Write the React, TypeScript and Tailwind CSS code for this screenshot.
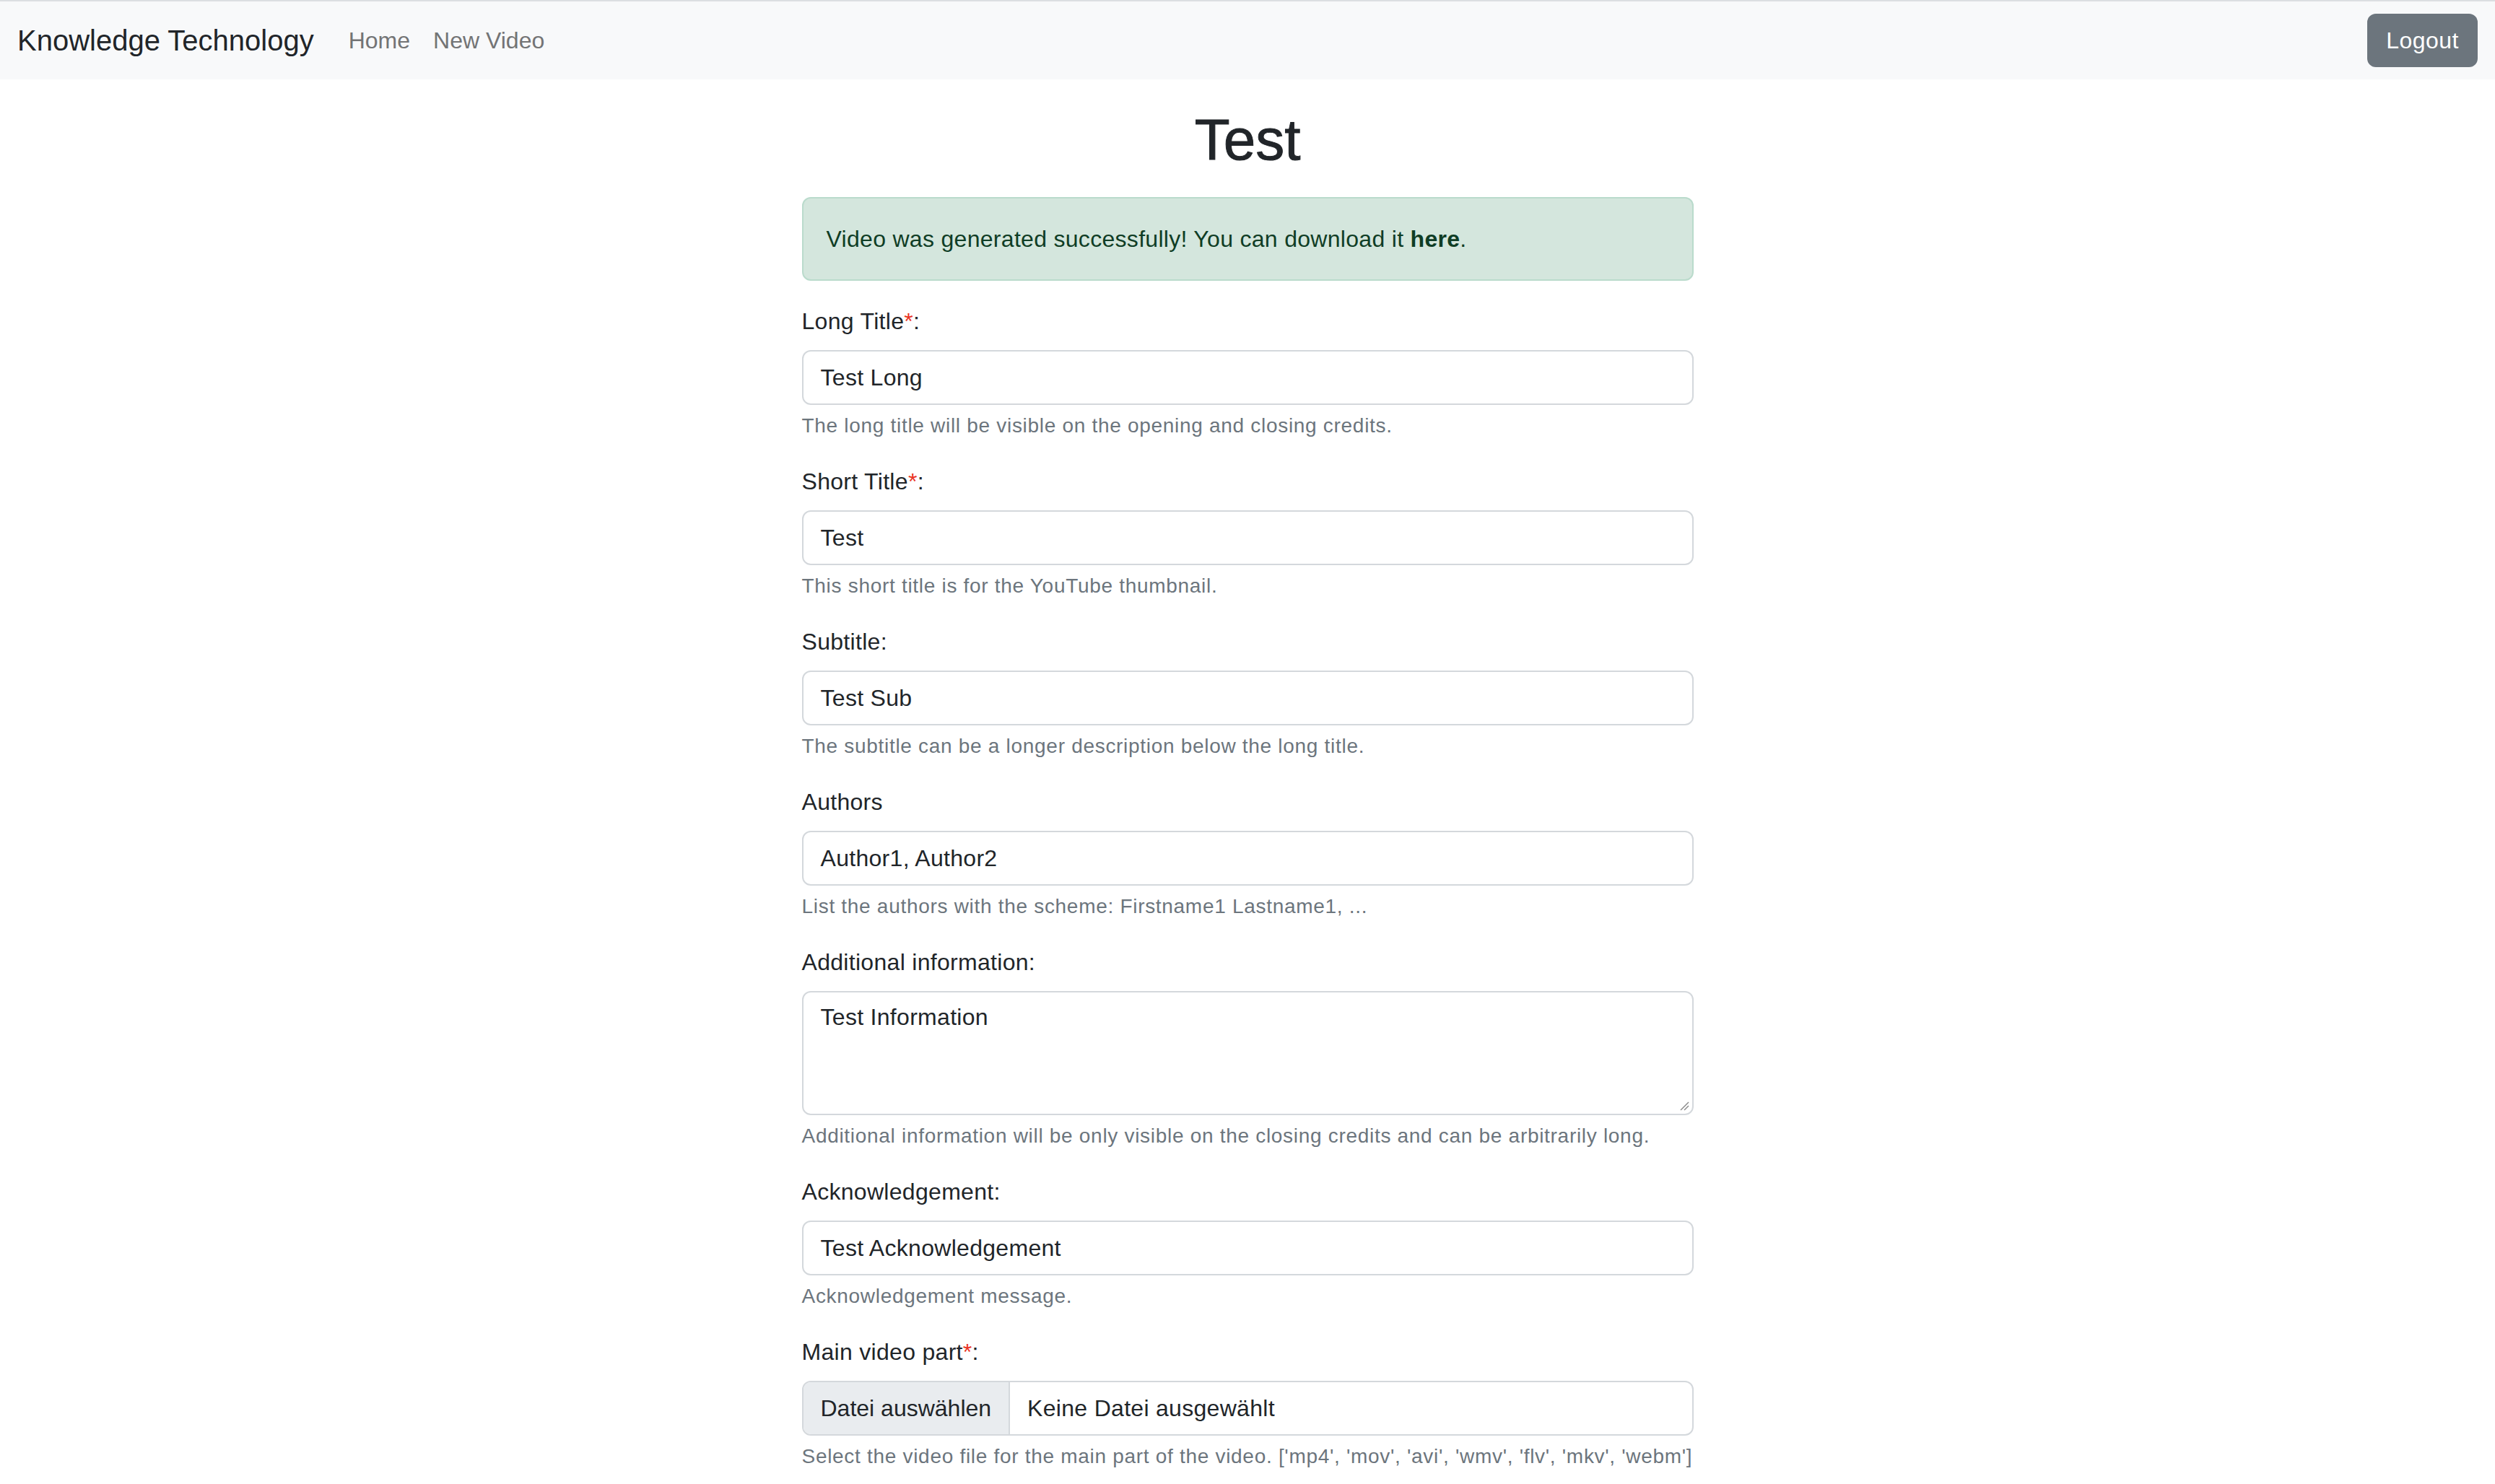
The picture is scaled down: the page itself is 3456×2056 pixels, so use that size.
import React from "react";

type FieldDef = {
    label: string;
    required?: boolean;
    colon?: boolean;
    value: string;
    help: string;
    kind: "input" | "textarea" | "file";
};

const fields: FieldDef[] = [
    { label: "Long Title", required: true, colon: true, value: "Test Long", help: "The long title will be visible on the opening and closing credits.", kind: "input" },
    { label: "Short Title", required: true, colon: true, value: "Test", help: "This short title is for the YouTube thumbnail.", kind: "input" },
    { label: "Subtitle", colon: true, value: "Test Sub", help: "The subtitle can be a longer description below the long title.", kind: "input" },
    { label: "Authors", value: "Author1, Author2", help: "List the authors with the scheme: Firstname1 Lastname1, ...", kind: "input" },
    { label: "Additional information", colon: true, value: "Test Information", help: "Additional information will be only visible on the closing credits and can be arbitrarily long.", kind: "textarea" },
    { label: "Acknowledgement", colon: true, value: "Test Acknowledgement", help: "Acknowledgement message.", kind: "input" },
    { label: "Main video part", required: true, colon: true, value: "Keine Datei ausgewählt", help: "Select the video file for the main part of the video. ['mp4', 'mov', 'avi', 'wmv', 'flv', 'mkv', 'webm']", kind: "file" },
];

function Navbar() {
    return (
        <nav className="h-[110px] flex items-center justify-between px-[24px] bg-[#f8f9fa] border-t-2 border-[#dcdee1]">
            <div className="flex items-center">
                <span className="text-[40px] leading-[60px] text-[#212529] mr-[32px]">Knowledge Technology</span>
                <a className="px-[16px] text-[32px] leading-[48px] text-[#737475]">Home</a>
                <a className="px-[16px] text-[32px] leading-[48px] text-[#737475]">New Video</a>
            </div>
            <button className="h-[74px] px-[26px] rounded-[12px] bg-[#6c757d] text-white text-[32px] leading-[48px] tracking-[0.5px]">
                Logout
            </button>
        </nav>
    );
}

function ResizeHandle() {
    return (
        <svg className="absolute right-[4px] bottom-[4px]" width="14" height="14" viewBox="0 0 14 14">
            <line x1="13" y1="2" x2="2" y2="13" stroke="#8a8a8a" strokeWidth="1.5" />
            <line x1="13" y1="7" x2="7" y2="13" stroke="#8a8a8a" strokeWidth="1.5" />
        </svg>
    );
}

function Control({ field }: { field: FieldDef }) {
    if (field.kind === "file") {
        return (
            <div className="flex h-[76px] border-2 border-[#d4d8dc] rounded-[12px] overflow-hidden">
                <div className="flex items-center px-[24px] bg-[#e9ecef] border-r-2 border-[#d4d8dc] tracking-normal">Datei auswählen</div>
                <div className="flex items-center px-[24px]">{field.value}</div>
            </div>
        );
    }
    if (field.kind === "textarea") {
        return (
            <div className="relative h-[172px] border-2 border-[#d4d8dc] rounded-[12px] px-[24px] py-[10px]">
                {field.value}
                <ResizeHandle />
            </div>
        );
    }
    return (
        <div className="h-[76px] flex items-center border-2 border-[#d4d8dc] rounded-[12px] px-[24px]">
            {field.value}
        </div>
    );
}

function Field({ field }: { field: FieldDef }) {
    return (
        <div className="mb-[32px]">
            <label className="block mb-[16px]">
                {field.label}
                {field.required && <span className="text-[#ea3323]">*</span>}
                {field.colon && ":"}
            </label>
            <Control field={field} />
            <div className="mt-[8px] text-[28px] leading-[42px] tracking-[0.7px] text-[#6c757d]">{field.help}</div>
        </div>
    );
}

export default function App() {
    return (
        <div className="min-h-screen bg-white text-[#212529] text-[32px] leading-[48px] font-['Liberation_Sans',Arial,sans-serif]">
            <Navbar />
            <main className="w-[1235px] mx-auto tracking-[0.3px]">
                <h1 className="mt-[36px] mb-[31px] text-center text-[80px] leading-[96px] tracking-normal [-webkit-text-stroke:1px_#212529]">Test</h1>
                <div className="mb-[32px] px-[32px] py-[32px] rounded-[12px] border-2 border-[#badbcc] bg-[#d4e6dd] text-[#0f3d25]">
                    Video was generated successfully! You can download it <b className="font-bold">here</b>.
                </div>
                {fields.map((f) => (
                    <Field key={f.label} field={f} />
                ))}
            </main>
        </div>
    );
}
